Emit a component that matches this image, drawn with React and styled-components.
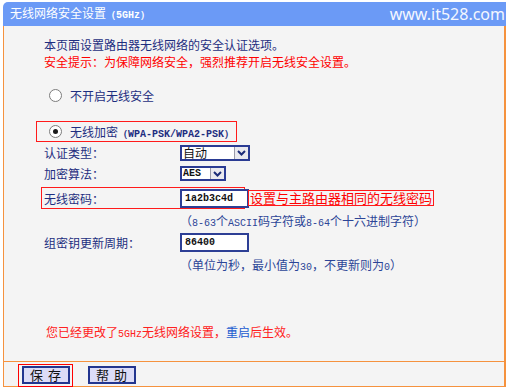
import React from 'react'
import styled, { createGlobalStyle } from 'styled-components'

const GlobalStyle = createGlobalStyle`
    body {
        margin: 0;
        background: #ffffff;
        font-family: "Noto Sans CJK SC", "Noto Sans", sans-serif;
        font-size: 12px;
    }
`

const Chevron = () => (
    <svg width="9" height="6" viewBox="0 0 9 6">
        <polyline points="1,1 4.5,4.5 8,1" fill="none" stroke="#1c2c78" strokeWidth="2" />
    </svg>
)

const App = () => {
    return (
        <Frame>
            <GlobalStyle />
            <Header>
                <Title>无线网络安全设置<Mono $bold>（5GHz）</Mono></Title>
                <Watermark>www.it528.com</Watermark>
            </Header>
            <Body>
                <Intro>
                    <div>本页面设置路由器无线网络的安全认证选项。</div>
                    <Warn>安全提示：为保障网络安全，强烈推荐开启无线安全设置。</Warn>
                </Intro>
                <RadioRow>
                    <Radio />
                    <span>不开启无线安全</span>
                </RadioRow>
                <RadioRow $marked>
                    <Radio $checked />
                    <span>无线加密<Mono $bold>（WPA-PSK/WPA2-PSK）</Mono></span>
                </RadioRow>
                <FieldRow $h={21}>
                    <Mark>
                        <Label>认证类型：</Label>
                        <Select $w={70} $h={16}>
                            <SelectValue>自动</SelectValue>
                            <DropButton><Chevron /></DropButton>
                        </Select>
                    </Mark>
                </FieldRow>
                <FieldRow $h={21}>
                    <Mark>
                        <Label>加密算法：</Label>
                        <Select $w={46} $h={15}>
                            <SelectValue $mono>AES</SelectValue>
                            <DropButton><Chevron /></DropButton>
                        </Select>
                    </Mark>
                </FieldRow>
                <FieldRow $h={22} $top={3}>
                    <Mark $marked>
                        <Label>无线密码：</Label>
                        <TextInput type="text" defaultValue="1a2b3c4d" />
                    </Mark>
                    <Note>设置与主路由器相同的无线密码</Note>
                </FieldRow>
                <Hint>（<Mono>8-63</Mono>个<Mono>ASCII</Mono>码字符或<Mono>8-64</Mono>个十六进制字符）</Hint>
                <FieldRow $h={21} $top={1}>
                    <Mark>
                        <Label>组密钥更新周期：</Label>
                        <TextInput type="text" defaultValue="86400" />
                    </Mark>
                </FieldRow>
                <Hint>（单位为秒，最小值为<Mono>30</Mono>，不更新则为<Mono>0</Mono>）</Hint>
                <Message>
                    您已经更改了<Mono>5GHz</Mono>无线网络设置，<Link>重启</Link>后生效。
                </Message>
            </Body>
            <Footer>
                <Highlight>
                    <Button>保 存</Button>
                </Highlight>
                <Button $gap={15}>帮 助</Button>
            </Footer>
        </Frame>
    )
}

const orange = '#f5923e'
const navy = '#1e2e80'

const Frame = styled.div`
    width: 503px;
    margin: 2px 0 0 3px;
`
const Header = styled.div`
    height: 24px;
    box-sizing: border-box;
    background: #6b9af6;
    border-top-left-radius: 5px;
    display: flex;
    align-items: center;
    justify-content: space-between;
    padding: 0 1px 0 7px;
    color: #ffffff;
`
const Title = styled.div`
    font-size: 12px;
    line-height: 24px;
    white-space: nowrap;
`
const Watermark = styled.div`
    font-family: "Noto Sans", "Open Sans", sans-serif;
    font-size: 16px;
    line-height: 24px;
    color: #f4f7ff;
`
const Mono = styled.span`
    font-family: "Liberation Mono", "DejaVu Sans Mono", monospace;
    font-size: 10px;
    font-weight: ${p => (p.$bold ? 'bold' : 'normal')};
`
const Body = styled.div`
    height: 335px;
    box-sizing: border-box;
    background: #f4f4f4;
    border-left: 1px solid ${orange};
    border-right: 2px solid ${orange};
    padding: 10px 0 0 32px;
    color: ${navy};
`
const Intro = styled.div`
    line-height: 17px;
    margin-left: 8px;
`
const Warn = styled.div`
    color: #ff0000;
`
const RadioRow = styled.div`
    display: flex;
    align-items: center;
    gap: 8px;
    box-sizing: border-box;
    width: ${p => (p.$marked ? '201px' : 'auto')};
    height: ${p => (p.$marked ? '21px' : '20px')};
    margin-top: ${p => (p.$marked ? '16px' : '15px')};
    padding-left: ${p => (p.$marked ? '12px' : '13px')};
    border: ${p => (p.$marked ? '1px solid #ff1a1a' : 'none')};
    font-size: 12px;
`
const Radio = styled.span`
    position: relative;
    width: 13px;
    height: 13px;
    box-sizing: border-box;
    border-radius: 50%;
    border: 1px solid #7c7c7c;
    background: #ffffff;
    &::after {
        content: '';
        display: ${p => (p.$checked ? 'block' : 'none')};
        position: absolute;
        left: 3px;
        top: 3px;
        width: 5px;
        height: 5px;
        border-radius: 50%;
        background: #1a1a1a;
    }
`
const FieldRow = styled.div`
    display: flex;
    align-items: center;
    height: ${p => p.$h}px;
    margin-top: ${p => p.$top || 0}px;
`
const Mark = styled.div`
    display: flex;
    align-items: center;
    flex-shrink: 0;
    width: 204px;
    height: 100%;
    box-sizing: border-box;
    margin-left: 5px;
    padding-left: 2px;
    border: 1px solid ${p => (p.$marked ? '#ff1a1a' : 'transparent')};
`
const Label = styled.div`
    width: 136px;
    flex-shrink: 0;
`
const Select = styled.div`
    display: flex;
    flex-shrink: 0;
    width: ${p => p.$w}px;
    height: ${p => p.$h}px;
    box-sizing: border-box;
    border: 2px solid #2a3b93;
    background: #ffffff;
`
const SelectValue = styled.div`
    flex: 1;
    color: #111111;
    padding-left: 1px;
    line-height: ${p => (p.$mono ? '11px' : '12px')};
    font-family: ${p => (p.$mono ? '"Liberation Mono", monospace' : 'inherit')};
    font-size: ${p => (p.$mono ? '10px' : '12px')};
    font-weight: ${p => (p.$mono ? 'bold' : 'normal')};
`
const DropButton = styled.div`
    width: 13px;
    display: flex;
    align-items: center;
    justify-content: center;
    background: #e9e9ee;
    border-left: 1px solid #9a9aa8;
`
const TextInput = styled.input.attrs({ readOnly: true })`
    flex-shrink: 0;
    width: 69px;
    height: 19px;
    box-sizing: border-box;
    margin: 0;
    padding: 0 0 0 3px;
    border: 2px solid #2d3f95;
    background: #ffffff;
    color: #111111;
    font-family: "Liberation Mono", "DejaVu Sans Mono", monospace;
    font-size: 10px;
    font-weight: bold;
    outline: none;
`
const Note = styled.div`
    margin-left: 3px;
    height: 16px;
    box-sizing: border-box;
    padding: 0 1px;
    border: 1px solid #ff1a1a;
    color: #ff0000;
    font-size: 13px;
    line-height: 14px;
    white-space: nowrap;
`
const Hint = styled.div`
    margin: 2px 0 0 144px;
    height: 20px;
    line-height: 20px;
    color: #2c4597;
    white-space: nowrap;
`
const Message = styled.div`
    margin: 49px 0 0 10px;
    line-height: 16px;
    color: #ff2020;
`
const Link = styled.span`
    color: #1a5bd0;
`
const Footer = styled.div`
    height: 26px;
    box-sizing: border-box;
    background: #f4f4f4;
    border: 1px solid ${orange};
    border-right-width: 2px;
    display: flex;
    align-items: flex-start;
    padding: 2px 0 0 14px;
`
const Highlight = styled.div`
    border: 1px solid #ff0000;
    padding: 1px 2px 2px 3px;
    position: relative;
    z-index: 1;
`
const Button = styled.button`
    width: 48px;
    height: 18px;
    box-sizing: border-box;
    margin: ${p => (p.$gap ? `2px 0 0 ${p.$gap}px` : '0')};
    padding: 0;
    border: 2px solid #22358f;
    background: #dcdcf7;
    color: #111111;
    font-family: "Noto Sans CJK SC", sans-serif;
    font-size: 13px;
    line-height: 14px;
    letter-spacing: 1px;
`

export default App
